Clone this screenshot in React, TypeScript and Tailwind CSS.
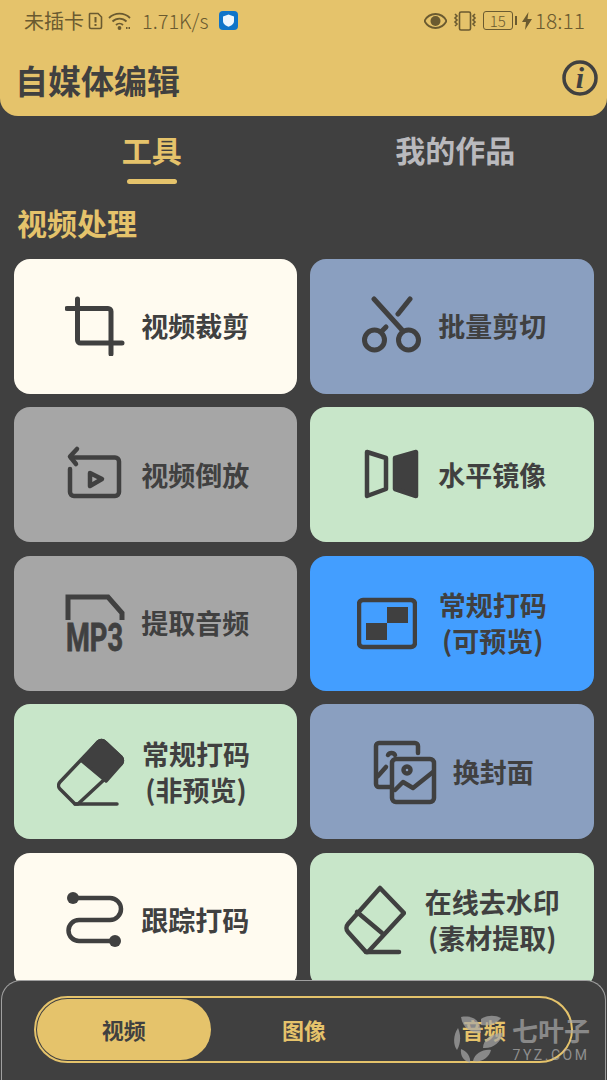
import type { ReactNode } from "react";

const INK = "#404040";

function CropIcon() {
  return (
    <svg width="60" height="60" viewBox="0 0 60 60" fill="none" stroke={INK} strokeWidth="5" strokeLinecap="round">
      <path d="M12.5 3V44a3 3 0 0 0 3 3H57" />
      <path d="M2 12.5H43a3 3 0 0 1 3 3V58" />
    </svg>
  );
}

function ScissorsIcon() {
  return (
    <svg width="60" height="60" viewBox="0 0 60 60" fill="none" stroke={INK} strokeWidth="5" strokeLinecap="round">
      <circle cx="12.5" cy="44" r="10" />
      <circle cx="46.5" cy="44" r="10" />
      <path d="M12 3L41 35" />
      <path d="M48 3L36 18" />
      <path d="M20 35L24 31" />
    </svg>
  );
}

function ReverseIcon() {
  return (
    <svg width="60" height="60" viewBox="0 0 60 60" fill="none" stroke={INK} strokeWidth="4.5" strokeLinecap="round" strokeLinejoin="round">
      <path d="M5 24V47a4 4 0 0 0 4 4H50a4 4 0 0 0 4-4V16.5a4 4 0 0 0-4-4H6" />
      <path d="M12 4L5 11.5L11 19" />
      <path d="M25 28L37 34L25 41Z" />
    </svg>
  );
}

function MirrorIcon() {
  return (
    <svg width="60" height="60" viewBox="0 0 60 60" fill="none" stroke={INK} strokeWidth="4.5" strokeLinejoin="round">
      <path d="M5 7L24 13V44L5 51Z" />
      <path d="M33 13L54 7V51L33 44Z" fill={INK} />
    </svg>
  );
}

function Mp3Icon() {
  return (
    <svg width="60" height="60" viewBox="0 0 60 60" fill="none" className="overflow-visible">
      <path d="M3 27V4H43L57 20V27" stroke={INK} strokeWidth="5" />
      <text
        x="1"
        y="58"
        fill={INK}
        stroke={INK}
        strokeWidth="0.8"
        fontFamily="Roboto, sans-serif"
        fontWeight="700"
        fontSize="38"
        textLength="57"
        lengthAdjust="spacingAndGlyphs"
      >
        MP3
      </text>
    </svg>
  );
}

function MosaicIcon() {
  return (
    <svg width="60" height="60" viewBox="0 0 60 60" fill="none">
      <rect x="2" y="7" width="56" height="47" rx="4" stroke={INK} strokeWidth="4.5" />
      <rect x="30" y="14" width="21" height="16" fill={INK} />
      <rect x="9" y="30" width="21" height="17" fill={INK} />
    </svg>
  );
}

function EraserFilledIcon() {
  return (
    <svg width="68" height="70" viewBox="0 0 68 70" fill="none" stroke={INK} strokeWidth="3.5" strokeLinejoin="round" strokeLinecap="round">
      <path d="M41 5a5 5 0 0 1 7 0L64 20a5 5 0 0 1 0 7L21 67H18L3 52a5 5 0 0 1 0-7Z" />
      <path d="M41 5a5 5 0 0 1 7 0L64 20a5 5 0 0 1 0 7L49 44L25 24Z" fill={INK} />
      <path d="M18 67H60" />
    </svg>
  );
}

function ImagesIcon() {
  return (
    <svg width="64" height="66" viewBox="0 0 64 66" fill="none" stroke={INK} strokeWidth="4.5" strokeLinecap="round" strokeLinejoin="round">
      <path d="M45 14V7a3 3 0 0 0-3-3H6a3 3 0 0 0-3 3V45a3 3 0 0 0 3 3H17" />
      <rect x="19" y="20" width="42" height="43" rx="4" />
      <path d="M15 16a4 4 0 0 1 7 0" />
      <path d="M5 37L13 28" />
      <circle cx="34" cy="31" r="3.5" />
      <path d="M22 51L30 43L40 49L60 33" />
    </svg>
  );
}

function TrackIcon() {
  return (
    <svg width="60" height="60" viewBox="0 0 60 60" fill="none" stroke={INK} strokeWidth="4.5" strokeLinecap="round">
      <path d="M8 8H45a11 11 0 0 1 0 22H14a10.5 10.5 0 0 0 0 21H50" />
      <circle cx="8" cy="8" r="6" fill={INK} stroke="none" />
      <circle cx="50" cy="51" r="6" fill={INK} stroke="none" />
    </svg>
  );
}

function EraserIcon() {
  return (
    <svg width="62" height="70" viewBox="0 0 62 70" fill="none" stroke={INK} strokeWidth="4.5" strokeLinejoin="round" strokeLinecap="round">
      <path d="M36 3L60 28L24 67H22L4 47a6 6 0 0 1 0-8Z" />
      <path d="M13 27L38 48" />
      <path d="M22 67H55" />
    </svg>
  );
}

function Card({ bg, icon, layout, children }: { bg: string; icon: ReactNode; layout: string; children: ReactNode }) {
  return (
    <div className={`${bg} ${layout} h-[135px] rounded-[16px] flex items-center justify-center`}>
      <div className="shrink-0">{icon}</div>
      <div className="text-[27px] leading-[36px] font-bold text-[#404040] text-center">{children}</div>
    </div>
  );
}

function StatusBar() {
  return (
    <div className="h-[41px] pl-[24px] pr-[22px] flex items-center justify-between text-[20px] text-[#6a5a30]">
      <div className="flex items-center">
        <span>未插卡</span>
        <svg className="ml-[4px]" width="15" height="18" viewBox="0 0 15 18" fill="none" stroke="#6a5a30" strokeWidth="1.6">
          <path d="M2 1.5H10L13.5 5V15a1.5 1.5 0 0 1-1.5 1.5H3A1.5 1.5 0 0 1 1.5 15V2Z" />
          <path d="M7.5 5V10.5M7.5 12V14" strokeWidth="2" />
        </svg>
        <svg className="ml-[5px]" width="24" height="18" viewBox="0 0 24 18" fill="none" stroke="#6a5a30" strokeWidth="1.8">
          <path d="M1 6a15 15 0 0 1 21 0" />
          <path d="M4.5 9.5a10 10 0 0 1 14 0" />
          <path d="M8 13a5 5 0 0 1 7 0" />
          <circle cx="11.5" cy="16" r="1" fill="#6a5a30" />
          <path d="M18 16h5" strokeDasharray="1.5 1" />
        </svg>
        <span className="ml-[10px] font-light">1.71K/s</span>
        <svg className="ml-[11px]" width="19" height="19" viewBox="0 0 19 19">
          <rect width="19" height="19" rx="4" fill="#0f74c9" />
          <path d="M9.5 3.5L15 5.5V10c0 3-2.5 4.7-5.5 5.8C6.5 14.7 4 13 4 10V5.5Z" fill="#eef6fd" />
        </svg>
      </div>
      <div className="flex items-center">
        <svg width="23" height="16" viewBox="0 0 23 16">
          <path d="M0.5 8C3 3 7 1 11.5 1S20 3 22.5 8C20 13 16 15 11.5 15S3 13 0.5 8Z" fill="none" stroke="#6a5a30" strokeWidth="1.8" />
          <circle cx="11.5" cy="8" r="5" fill="#6a5a30" />
        </svg>
        <svg className="ml-[6px]" width="24" height="20" viewBox="0 0 24 20" fill="none" stroke="#6a5a30" strokeWidth="1.6">
          <rect x="6.5" y="1" width="11" height="18" rx="1.5" />
          <path d="M2 3l2 2-2 2 2 2-2 2 2 2-2 2M22 3l-2 2 2 2-2 2 2 2-2 2 2 2" />
        </svg>
        <div className="ml-[6px] w-[30px] h-[19px] border-[1.5px] border-[#6a5a30] rounded-[3px] flex items-center justify-center text-[15px] leading-none font-light">15</div>
        <div className="ml-[2px] w-[2px] h-[9px] bg-[#6a5a30]" />
        <svg className="ml-[5px]" width="10" height="18" viewBox="0 0 10 18">
          <path d="M6.5 0L0 10H4L3 18L10 7H5.5Z" fill="#6a5a30" />
        </svg>
        <span className="ml-[3px] text-[21px] leading-none font-light">18:11</span>
      </div>
    </div>
  );
}

export default function App() {
  return (
    <div className="relative w-[607px] h-[1080px] overflow-hidden bg-[#404040] font-['Noto_Sans_CJK_SC','Noto_Sans',sans-serif]">
      {/* Header */}
      <div className="h-[116px] bg-[#e5c36b] rounded-b-[18px]">
        <StatusBar />
        <div className="pt-[15px] pl-[15px] pr-[9px] flex items-center justify-between">
          <h1 className="text-[33px] leading-[48px] font-bold text-[#404040]">自媒体编辑</h1>
          <svg className="mb-[4px]" width="36" height="36" viewBox="0 0 36 36">
            <circle cx="18" cy="18" r="16" fill="none" stroke={INK} strokeWidth="3.5" />
            <text x="18" y="28" textAnchor="middle" fill={INK} fontFamily="'Liberation Serif', serif" fontStyle="italic" fontWeight="700" fontSize="30">
              i
            </text>
          </svg>
        </div>
      </div>

      {/* Tabs */}
      <div className="grid grid-cols-2 pt-[11px]">
        <div className="flex flex-col items-center">
          <span className="text-[30px] leading-[44px] font-bold text-[#e5c36b]">工具</span>
          <div className="mt-[8px] w-[50px] h-[5px] rounded-full bg-[#e5c36b]" />
        </div>
        <div className="flex flex-col items-center">
          <span className="text-[30px] leading-[44px] font-bold text-[#b9b9bd]">我的作品</span>
        </div>
      </div>

      <h2 className="pl-[17px] mt-[16px] text-[30px] leading-[44px] font-bold text-[#e5c36b]">视频处理</h2>

      {/* Tool cards */}
      <div className="mt-[14.5px] px-[13.5px] grid grid-cols-2 gap-x-[13px] gap-y-[13.5px]">
        <Card bg="bg-[#fffbf0]" icon={<CropIcon />} layout="gap-[16px] pl-[4px]">视频裁剪</Card>
        <Card bg="bg-[#8a9fc0]" icon={<ScissorsIcon />} layout="gap-[16px] pl-[5px]">批量剪切</Card>
        <Card bg="bg-[#a6a6a6]" icon={<ReverseIcon />} layout="gap-[16px] pl-[4px]">视频倒放</Card>
        <Card bg="bg-[#c8e6c9]" icon={<MirrorIcon />} layout="gap-[16px] pl-[5px]">水平镜像</Card>
        <Card bg="bg-[#a6a6a6]" icon={<Mp3Icon />} layout="gap-[16px] pl-[4px]">提取音频</Card>
        <Card bg="bg-[#439eff]" icon={<MosaicIcon />} layout="gap-[22px]">
          常规打码
          <br />
          (可预览)
        </Card>
        <Card bg="bg-[#c8e6c9]" icon={<EraserFilledIcon />} layout="gap-[17px] pr-[3.5px]">
          常规打码
          <br />
          (非预览)
        </Card>
        <Card bg="bg-[#8a9fc0]" icon={<ImagesIcon />} layout="gap-[16px] pl-[3px]">换封面</Card>
        <Card bg="bg-[#fffbf0]" icon={<TrackIcon />} layout="gap-[16px] pl-[4px]">跟踪打码</Card>
        <Card bg="bg-[#c8e6c9]" icon={<EraserIcon />} layout="gap-[19px]">
          在线去水印
          <br />
          (素材提取)
        </Card>
      </div>

      {/* Bottom switcher */}
      <div className="absolute left-[1px] right-[1px] top-[980px] bottom-0 bg-[#404040] border border-b-0 border-[#a0a0a0] rounded-t-[20px] px-[32px] pt-[15px]">
        <div className="w-[539px] h-[67px] border-2 border-[#e5c36b] rounded-full p-[1px] flex items-center text-[22px] font-bold text-[#e5c36b]">
          <div className="w-[174px] h-[61px] rounded-full bg-[#e5c36b] text-[#404040] flex items-center justify-center">视频</div>
          <div className="w-[187px] text-center">图像</div>
          <div className="w-[173px] text-center">音频</div>
        </div>
      </div>

      {/* Watermark */}
      <div className="absolute left-[453px] top-[1015px] flex items-start opacity-70">
        <svg width="54" height="48" viewBox="0 0 54 48" fill="#a8a8a8">
          <path d="M8 2C18 0 28 4 28 18C18 18 10 14 8 2Z" />
          <path d="M28 4C34 0 42 0 48 3C42 10 36 11 28 10Z" />
          <path d="M5 13C0 20 0 30 4 35C8 28 8 20 5 13Z" />
          <path d="M8 34C14 36 18 42 17 48C11 46 7 41 8 34Z" />
          <path d="M20 46C22 38 30 34 38 35C36 43 28 48 20 46Z" />
          <path d="M30 33C30 25 38 18 50 18C48 27 40 34 30 33Z" />
        </svg>
        <div className="ml-[5px] mt-[1px] flex flex-col items-center">
          <span className="text-[26px] leading-[28px] font-bold text-[#a8a8a8]">七叶子</span>
          <span className="mt-[3px] text-[14px] leading-[16px] text-[#b0b0b0] tracking-[2.5px] font-['Roboto',sans-serif]">7YZ.COM</span>
        </div>
      </div>
    </div>
  );
}
